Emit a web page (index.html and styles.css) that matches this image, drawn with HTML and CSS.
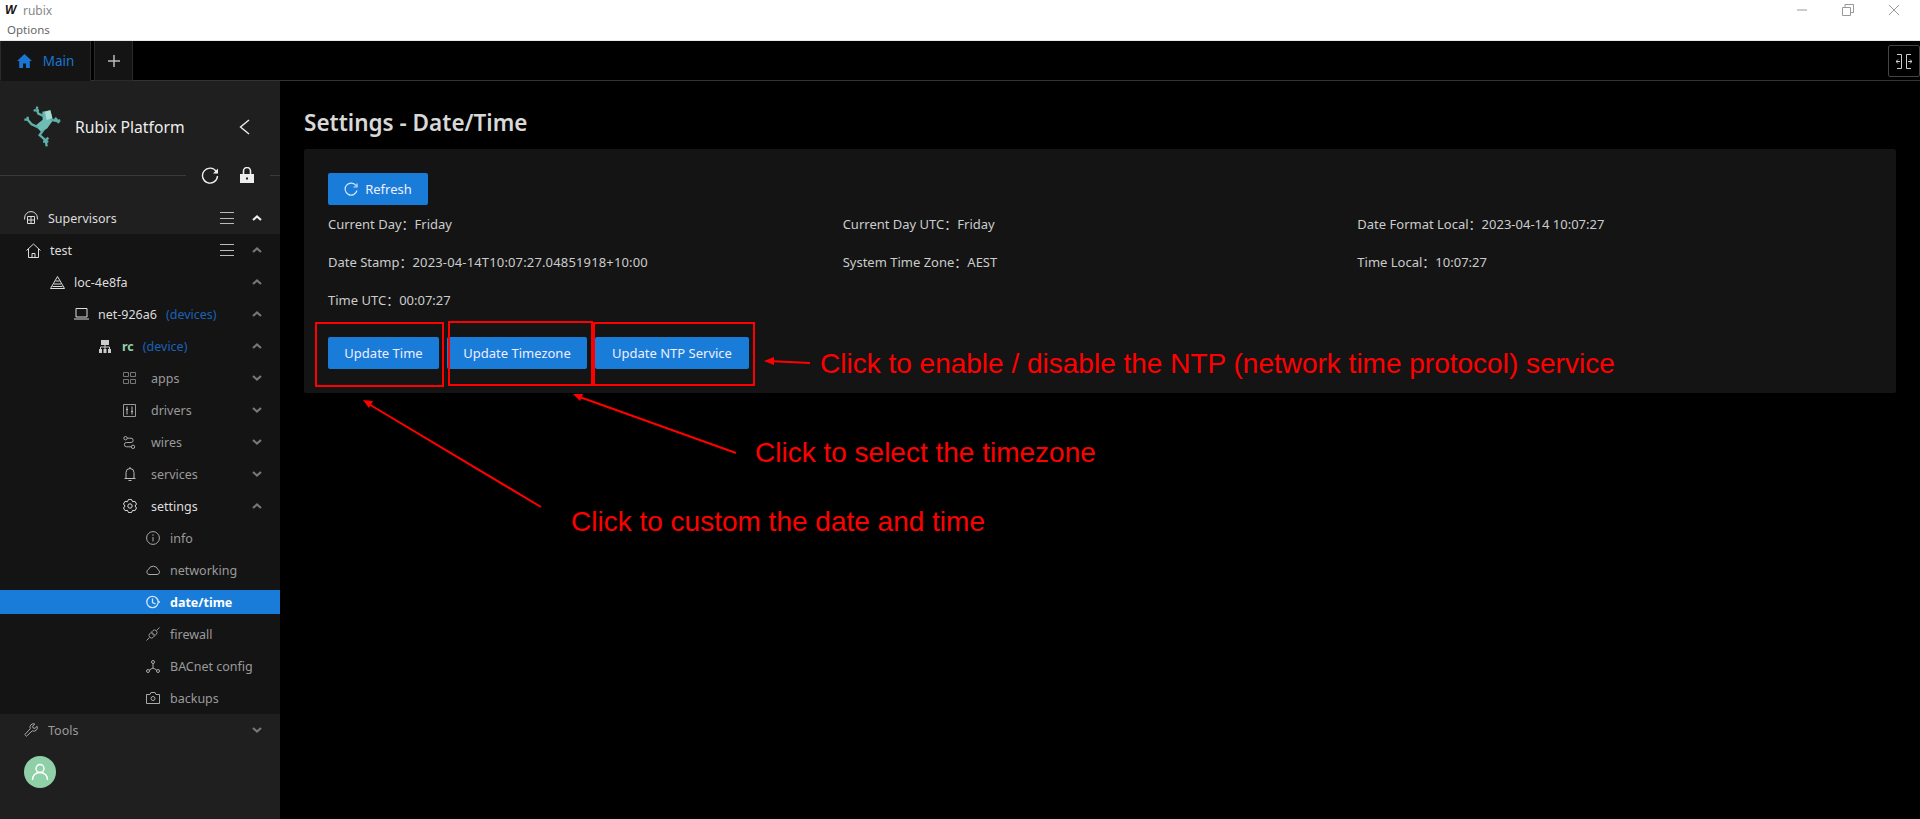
FILE: index.html
```html
<!DOCTYPE html>
<html lang="en">
<head>
    <meta charset="UTF-8">
    <title>rubix</title>
    <link rel="stylesheet" href="styles.css">
</head>
<body>

    <!-- Window chrome -->
    <div class="titlebar">
        <span class="app-icon">W</span>
        <span class="app-name">rubix</span>
        <div class="window-controls">
            <svg width="12" height="12" viewBox="0 0 12 12"><path d="M1 6h10" stroke="#999" fill="none"/></svg>
            <svg width="12" height="12" viewBox="0 0 12 12"><path d="M.5 3.500h8v8h-8zM3 3.500V.5h8.500v8H8.500" stroke="#999" fill="none"/></svg>
            <svg width="12" height="12" viewBox="0 0 12 12"><path d="M1 1l10 10M11 1L1 11" stroke="#999" fill="none"/></svg>
        </div>
    </div>
    <div class="menubar">Options</div>

    <!-- Tabs -->
    <div class="tabs">
        <div class="tab tab-main">
            <svg width="15" height="14" viewBox="0 0 15 14"><path d="M7.500 0L0 7h2.200v7h3.800V9.500h3V14h3.800V7H15z" fill="#1976d2"/></svg>
            <span>Main</span>
        </div>
        <div class="tab tab-add">
            <svg width="12" height="12" viewBox="0 0 12 12"><path d="M6 0v12M0 6h12" stroke="#bbb" stroke-width="1.500" fill="none"/></svg>
        </div>
        <div class="tab-collapse">
            <svg width="16" height="15" viewBox="0 0 16 15"><path d="M1 .5h4.500v14H1M15 .5h-4.500v14H15" stroke="#ccc" fill="none"/><path d="M0 7.500h4M2 5.500l-2 2 2 2M16 7.500h-4M14 5.500l2 2-2 2" stroke="#ccc" fill="none"/></svg>
        </div>
    </div>

    <div class="layout">
        <!-- Sidebar -->
        <aside class="sidebar">
            <div class="brand">
                <svg class="frog" width="60" height="60" viewBox="0 0 180 180">
                    <path d="M82 44l24-4 8 30-17 24-18 12-18-20 22-18z" fill="#6fbcb5"/>
                    <path d="M90 44l16-4 6 24-17 5z" fill="#a9dcd6"/>
                    <g stroke="#5fb0a9" stroke-width="7" fill="none">
                        <path d="M88 58l-18-8-5-14M56 40l16 0M65 36l2-7"/>
                        <path d="M106 68l20 4M120 62l8 10 8-2M128 72l4 6"/>
                        <path d="M72 92L50 82 38 68M28 68l14 0M38 68l0-9"/>
                        <path d="M86 98l-12 16 18 16 3 18M84 134l16 0M92 130l8-8"/>
                    </g>
                </svg>
                <span class="brand-name">Rubix Platform</span>
                <svg class="brand-back" width="11" height="16" viewBox="0 0 11 16"><path d="M10 1L1.500 8l8.500 7" stroke="#eee" stroke-width="1.400" fill="none"/></svg>
            </div>
            <div class="side-tools">
                <div class="side-line"></div>
                <svg class="tool-refresh" width="18" height="18" viewBox="0 0 18 18"><path d="M15.300 5.500A7.500 7.500 0 1 0 16.500 10" stroke="#eee" stroke-width="1.400" fill="none"/><path d="M17 2.500v5h-5z" fill="#eee"/></svg>
                <svg class="tool-lock" width="14" height="16" viewBox="0 0 14 16"><path d="M3.500 7V4a3.500 3.500 0 0 1 7 0v3" stroke="#eee" stroke-width="1.600" fill="none"/><path d="M0 7h14v9H0z" fill="#eee"/><path d="M6 10.500h2v2H6z" fill="#222"/></svg>
                <div class="side-line side-line-short"></div>
            </div>

            <div class="row lvl-sup row-bright">
                <svg class="ico" width="14" height="14" viewBox="0 0 14 14"><path d="M.6 8.500V7a6.400 6.400 0 0 1 12.800 0v1.500" stroke="#ddd" fill="none"/><path d="M3.500 5.500h7v7h-7zM3.500 9h7M7 5.500v7" stroke="#ddd" fill="none"/></svg>
                <span class="label">Supervisors</span>
                <span class="menu-ico"></span>
                <svg class="chev" width="12" height="8" viewBox="0 0 12 8"><path d="M2 6l4-3.500L10 6" stroke="#eee" stroke-width="2.200" fill="none"/></svg>
            </div>

            <div class="tree">
                <div class="row lvl-0 row-bright">
                    <svg class="ico" width="15" height="15" viewBox="0 0 15 15"><path d="M.5 7.500L7.500 1l7 6.500M2.500 6v8.500h10V6M6 14.500v-4h3v4" stroke="#ddd" fill="none"/></svg>
                    <span class="label">test</span>
                    <span class="menu-ico"></span>
                    <svg class="chev" width="12" height="8" viewBox="0 0 12 8"><path d="M2 6l4-3.500L10 6" stroke="#777" stroke-width="2.200" fill="none"/></svg>
                </div>
                <div class="row lvl-1 row-bright">
                    <svg class="ico" width="15" height="13" viewBox="0 0 15 13"><path d="M7.500 .5L14.500 12.500H.5zM5.500 5h4M4 8h7M2.500 10.500h10" stroke="#ddd" fill="none"/></svg>
                    <span class="label">loc-4e8fa</span>
                    <svg class="chev" width="12" height="8" viewBox="0 0 12 8"><path d="M2 6l4-3.500L10 6" stroke="#777" stroke-width="2.200" fill="none"/></svg>
                </div>
                <div class="row lvl-2 row-bright">
                    <svg class="ico" width="15" height="12" viewBox="0 0 15 12"><path d="M2 .5h11v8.500H2zM0 11h15" stroke="#ddd" fill="none"/></svg>
                    <span class="label">net-926a6</span>
                    <span class="tag">(devices)</span>
                    <svg class="chev" width="12" height="8" viewBox="0 0 12 8"><path d="M2 6l4-3.500L10 6" stroke="#777" stroke-width="2.200" fill="none"/></svg>
                </div>
                <div class="row lvl-3 row-bright">
                    <svg class="ico" width="12" height="13" viewBox="0 0 12 13"><path d="M2 0h8v5H2zM0 9h3v4H0zM4.500 9h3v4h-3zM9 9h3v4H9z" fill="#ccc"/><path d="M6 5v4M1.500 9V7h9v2" stroke="#ccc" fill="none"/></svg>
                    <span class="label label-green">rc</span>
                    <span class="tag">(device)</span>
                    <svg class="chev" width="12" height="8" viewBox="0 0 12 8"><path d="M2 6l4-3.500L10 6" stroke="#777" stroke-width="2.200" fill="none"/></svg>
                </div>
                <div class="row lvl-4">
                    <svg class="ico" width="13" height="12" viewBox="0 0 13 12"><path d="M.5.500h5v4h-5zM7.500.500h5v4h-5zM.5 7.500h5v4h-5zM7.500 7.500h5v4h-5z" stroke="#777" fill="none"/></svg>
                    <span class="label">apps</span>
                    <svg class="chev" width="12" height="8" viewBox="0 0 12 8"><path d="M2 2l4 3.500L10 2" stroke="#777" stroke-width="2.200" fill="none"/></svg>
                </div>
                <div class="row lvl-4">
                    <svg class="ico" width="13" height="13" viewBox="0 0 13 13"><path d="M.5.500h12v12H.5z" stroke="#999" fill="none"/><path d="M4 2.500v8M3 5.500h2M9 2.500v8M8 7.500h2" stroke="#bbb" fill="none"/></svg>
                    <span class="label">drivers</span>
                    <svg class="chev" width="12" height="8" viewBox="0 0 12 8"><path d="M2 2l4 3.500L10 2" stroke="#777" stroke-width="2.200" fill="none"/></svg>
                </div>
                <div class="row lvl-4">
                    <svg class="ico" width="13" height="13" viewBox="0 0 13 13"><circle cx="2.500" cy="2.200" r="1.700" stroke="#aaa" fill="none"/><circle cx="10" cy="10.800" r="1.700" stroke="#aaa" fill="none"/><path d="M4.200 2.200H8a2 2 0 0 1 0 4.300H3.500a2 2 0 0 0 0 4.300h4.800" stroke="#aaa" fill="none"/></svg>
                    <span class="label">wires</span>
                    <svg class="chev" width="12" height="8" viewBox="0 0 12 8"><path d="M2 2l4 3.500L10 2" stroke="#777" stroke-width="2.200" fill="none"/></svg>
                </div>
                <div class="row lvl-4">
                    <svg class="ico" width="12" height="14" viewBox="0 0 12 14"><path d="M.5 11.500h11M2 11.500V5.500a4 4 0 0 1 8 0v6M4.500 13.500h3M6 0v1.500" stroke="#bbb" fill="none"/></svg>
                    <span class="label">services</span>
                    <svg class="chev" width="12" height="8" viewBox="0 0 12 8"><path d="M2 2l4 3.500L10 2" stroke="#777" stroke-width="2.200" fill="none"/></svg>
                </div>
                <div class="row lvl-4 row-bright">
                    <svg class="ico" width="14" height="14" viewBox="0 0 14 14"><path d="M5.470.38h3.060L9.500 2.670l2.470-.31 1.530 2.650L12 7l1.500 1.990-1.530 2.650-2.470-.31-.97 2.290H5.470L4.500 11.330l-2.470.31L.5 8.990 2 7 .5 5.010l1.530-2.650 2.470.31z" stroke="#ddd" stroke-linejoin="round" fill="none"/><circle cx="7" cy="7" r="2.200" stroke="#ddd" fill="none"/></svg>
                    <span class="label">settings</span>
                    <svg class="chev" width="12" height="8" viewBox="0 0 12 8"><path d="M2 6l4-3.500L10 6" stroke="#777" stroke-width="2.200" fill="none"/></svg>
                </div>
                <div class="row lvl-5">
                    <svg class="ico" width="14" height="14" viewBox="0 0 14 14"><circle cx="7" cy="7" r="6.400" stroke="#aaa" fill="none"/><path d="M7 6v4.500M7 3.300v1.500" stroke="#aaa" fill="none"/></svg>
                    <span class="label">info</span>
                </div>
                <div class="row lvl-5">
                    <svg class="ico" width="14" height="10" viewBox="0 0 14 10"><path d="M3 9.500h8a2.500 2.500 0 0 0 1-4.800A5 5 0 0 0 2.500 4.500 2.600 2.600 0 0 0 3 9.500z" stroke="#aaa" fill="none"/></svg>
                    <span class="label">networking</span>
                </div>
                <div class="row lvl-5 row-active">
                    <svg class="ico" width="14" height="14" viewBox="0 0 14 14"><circle cx="6.500" cy="7" r="5.700" stroke="#cfe6fb" stroke-width="1.300" fill="none"/><path d="M6.500 3.500V7.500l3 1.500M12 7h2" stroke="#cfe6fb" stroke-width="1.300" fill="none"/></svg>
                    <span class="label">date/time</span>
                </div>
                <div class="row lvl-5">
                    <svg class="ico" width="14" height="14" viewBox="0 0 14 14"><path d="M5 5.500L8.500 9 7 10.500a2.500 2.500 0 0 1-3.500-3.500zM9 8.500L5.500 5 7 3.500A2.500 2.500 0 0 1 10.500 7zM.5 13.500l3-3M13.500.5l-3 3" stroke="#999" fill="none"/></svg>
                    <span class="label">firewall</span>
                </div>
                <div class="row lvl-5">
                    <svg class="ico" width="14" height="13" viewBox="0 0 14 13"><circle cx="7" cy="2" r="1.500" stroke="#aaa" fill="none"/><circle cx="2" cy="11" r="1.500" stroke="#aaa" fill="none"/><circle cx="12" cy="11" r="1.500" stroke="#aaa" fill="none"/><path d="M7 3.500V8M3.300 10L7 8l3.700 2" stroke="#aaa" fill="none"/></svg>
                    <span class="label">BACnet config</span>
                </div>
                <div class="row lvl-5">
                    <svg class="ico" width="14" height="12" viewBox="0 0 14 12"><path d="M.5 2.500h3.500l1-2h4l1 2h3.500v9H.5z" stroke="#aaa" fill="none"/><circle cx="7" cy="6.500" r="2" stroke="#aaa" fill="none"/></svg>
                    <span class="label">backups</span>
                </div>
            </div>

            <div class="row lvl-sup">
                <svg class="ico" width="14" height="14" viewBox="0 0 14 14"><path d="M.8 11.500l5.500-5.800a3.500 3.500 0 0 1 4.500-4.700L8.700 3.200l.4 1.800 1.800.4 2.200-2.100a3.500 3.500 0 0 1-4.800 4.500L2.500 13.200z" stroke="#aaa" fill="none"/></svg>
                <span class="label">Tools</span>
                <svg class="chev" width="12" height="8" viewBox="0 0 12 8"><path d="M2 2l4 3.500L10 2" stroke="#777" stroke-width="2.200" fill="none"/></svg>
            </div>
            <div class="avatar">
                <svg width="18" height="18" viewBox="0 0 18 18"><circle cx="9" cy="5.500" r="4" stroke="#fff" stroke-width="1.400" fill="none"/><path d="M1.500 17c0-4.500 3-7.500 7.500-7.500s7.500 3 7.500 7.500" stroke="#fff" stroke-width="1.400" fill="none"/></svg>
            </div>
        </aside>

        <!-- Page -->
        <main class="content">
            <h1 class="page-title">Settings - Date/Time</h1>
            <div class="card">
                <button class="btn btn-refresh">
                    <svg width="14" height="14" viewBox="0 0 14 14"><path d="M12.300 4A6 6 0 1 0 13 8.500" stroke="#cfe6fb" stroke-width="1.200" fill="none"/><path d="M13 1.500v3.500H9.500" stroke="#cfe6fb" stroke-width="1.200" fill="none"/></svg>
                    Refresh
                </button>
                <div class="info-grid">
                    <div>Current Day：Friday</div>
                    <div>Current Day UTC：Friday</div>
                    <div>Date Format Local：2023-04-14 10:07:27</div>
                    <div>Date Stamp：<span class="stamp">2023-04-14T10:07:27.04851918+10:00</span></div>
                    <div>System Time Zone：AEST</div>
                    <div>Time Local：10:07:27</div>
                    <div>Time UTC：00:07:27</div>
                </div>
                <div class="actions">
                    <button class="btn btn-time">Update Time</button>
                    <button class="btn btn-zone">Update Timezone</button>
                    <button class="btn btn-ntp">Update NTP Service</button>
                </div>
            </div>
        </main>
    </div>

    <!-- Annotations drawn over the page -->
    <svg class="marks" width="1920" height="819" viewBox="0 0 1920 819">
        <g fill="none" stroke="#f00" stroke-width="2">
            <path d="M316 323h127v63H316z"/>
            <path d="M449 322h143v63H449z"/>
            <path d="M594 323h160v62H594z"/>
            <path d="M810 363L768 361M736 453L577 396M541 507L367 403"/>
        </g>
        <g fill="#f00">
            <path d="M764 361l10-4v8z"/>
            <path d="M573 394l10 0-3 7z"/>
            <path d="M363 400l10 1-4 7z"/>
        </g>
    </svg>
    <div class="note note-ntp">Click to enable / disable the NTP (network time protocol) service</div>
    <div class="note note-zone">Click to select the timezone</div>
    <div class="note note-time">Click to custom the date and time</div>
</body>
</html>
```

FILE: styles.css
```css
body {
    margin: 0;
    height: 819px;
    overflow: hidden;
    background-color: #000;
    font-family: 'Noto Sans', 'Noto Sans CJK SC', sans-serif;
    font-size: 13px;
    color: #ccc;
}

/* window chrome */
.titlebar {
    display: flex;
    align-items: center;
    height: 20px;
    background-color: #fff;
    font-size: 12px;
}

.app-icon {
    width: 12px;
    margin-left: 5px;
    font-family: 'Liberation Sans', sans-serif;
    font-size: 12px;
    font-weight: 700;
    font-style: italic;
    color: #111;
}

.app-name {
    margin-left: 6px;
    color: #888;
}

.window-controls {
    display: flex;
    gap: 34px;
    margin-left: auto;
    margin-right: 20px;
}

.menubar {
    height: 20px;
    padding-left: 7px;
    line-height: 20px;
    font-size: 11.500px;
    color: #666;
    background-color: #fff;
    border-bottom: 1px solid #e8e8e8;
}

.tabs {
    display: flex;
    gap: 3px;
    height: 39px;
    border-bottom: 1px solid #333;
}

.tab {
    display: flex;
    align-items: center;
    justify-content: center;
    box-sizing: border-box;
    height: 40px;
    background-color: #141414;
    border: 1px solid #2a2a2a;
    border-top: none;
}

.tab-main {
    gap: 11px;
    width: 91px;
    font-size: 13.500px;
    color: #1976d2;
    border-bottom-color: #141414;
}

.tab-add {
    width: 39px;
}

.tab-collapse {
    display: flex;
    align-items: center;
    justify-content: center;
    box-sizing: border-box;
    width: 32px;
    height: 32px;
    margin: 4px 0 0 auto;
    border: 1px solid #444;
    border-radius: 2px;
}

.layout {
    display: flex;
    height: 738px;
}

/* sidebar */
.sidebar {
    display: flex;
    flex-direction: column;
    flex: none;
    width: 280px;
    background-color: #1f1f1f;
    font-size: 12.500px;
}

.brand {
    display: flex;
    align-items: center;
    box-sizing: border-box;
    height: 84px;
    padding: 8px 0 0 15px;
}

.brand-name {
    font-size: 15.700px;
    color: #eee;
}

.brand-back {
    margin-left: auto;
    margin-right: 30px;
}

.side-tools {
    display: flex;
    align-items: center;
    height: 20px;
    margin-bottom: 17px;
}

.side-line {
    flex: 1;
    height: 1px;
    background-color: #3a3a3a;
}

.side-line-short {
    flex: none;
    width: 10px;
}

.tool-refresh {
    margin: 0 21px 0 15px;
}

.tool-lock {
    margin-right: 16px;
}

.tree {
    display: flex;
    flex-direction: column;
    background-color: #141414;
}

.row {
    display: flex;
    align-items: center;
    flex: none;
    height: 24px;
    margin: 4px 0;
    color: #9a9a9a;
}

.lvl-sup { padding-left: 24px; }
.lvl-0 { padding-left: 26px; }
.lvl-1 { padding-left: 50px; }
.lvl-2 { padding-left: 74px; }
.lvl-3 { padding-left: 99px; }
.lvl-5 { padding-left: 146px; }

/* icons of this level differ in width, the labels still line up */
.lvl-4 {
    display: grid;
    grid-template-columns: 13px auto;
    column-gap: 15px;
    padding-left: 123px;
}

.lvl-4 .ico {
    justify-self: center;
    margin-right: 0;
}

.row-bright {
    color: #ddd;
}

.row-active {
    background-color: #1a7cd9;
    color: #fff;
    font-weight: 700;
}

.ico {
    flex: none;
    margin-right: 10px;
}

.lvl-0 .ico, .lvl-1 .ico, .lvl-2 .ico {
    margin-right: 9px;
}

.lvl-3 .ico {
    margin-right: 11px;
}

.label-green {
    font-weight: 700;
    color: #8fd0a8;
}

.tag {
    margin-left: 9px;
    color: #1a62b8;
}

.menu-ico {
    position: absolute;
    left: 220px;
    box-sizing: border-box;
    width: 14px;
    height: 12px;
    border-top: 1px solid #bbb;
    border-bottom: 1px solid #bbb;
    background: linear-gradient(#bbb, #bbb) center / 100% 1px no-repeat;
}

.chev {
    position: absolute;
    left: 251px;
}

.avatar {
    display: flex;
    align-items: center;
    justify-content: center;
    width: 32px;
    height: 32px;
    margin: 10px 0 0 24px;
    border-radius: 50%;
    background-color: #8fd0a8;
}

/* page */
.content {
    flex: 1;
    padding: 0 24px;
}

.page-title {
    margin: 26px 0 10px;
    font-size: 22.500px;
    font-weight: 600;
    line-height: 32px;
    color: #d8d8d8;
}

.card {
    box-sizing: border-box;
    height: 244px;
    padding: 24px;
    background-color: #141414;
    border-radius: 2px;
}

.btn {
    display: block;
    height: 32px;
    padding: 0;
    font-family: inherit;
    font-size: 13px;
    color: #eef;
    background-color: #1a7cd9;
    border: none;
    border-radius: 2px;
}

.btn-refresh {
    display: flex;
    align-items: center;
    justify-content: center;
    gap: 7px;
    width: 100px;
}

.info-grid {
    display: grid;
    grid-template-columns: repeat(3, 1fr);
    row-gap: 16px;
    margin-top: 8px;
    line-height: 22px;
}

.stamp {
    letter-spacing: .15px;
}

.actions {
    display: flex;
    gap: 8px;
    margin-top: 26px;
}

.btn-time { width: 111px; }
.btn-zone { width: 140px; }
.btn-ntp { width: 154px; }

/* annotations */
.marks {
    position: absolute;
    left: 0;
    top: 0;
}

.note {
    position: absolute;
    font-family: 'Liberation Sans', sans-serif;
    font-size: 28px;
    line-height: 30px;
    color: #f00;
    white-space: nowrap;
}

.note-ntp { left: 820px; top: 349px; }
.note-zone { left: 755px; top: 438px; }
.note-time { left: 571px; top: 507px; }
```
